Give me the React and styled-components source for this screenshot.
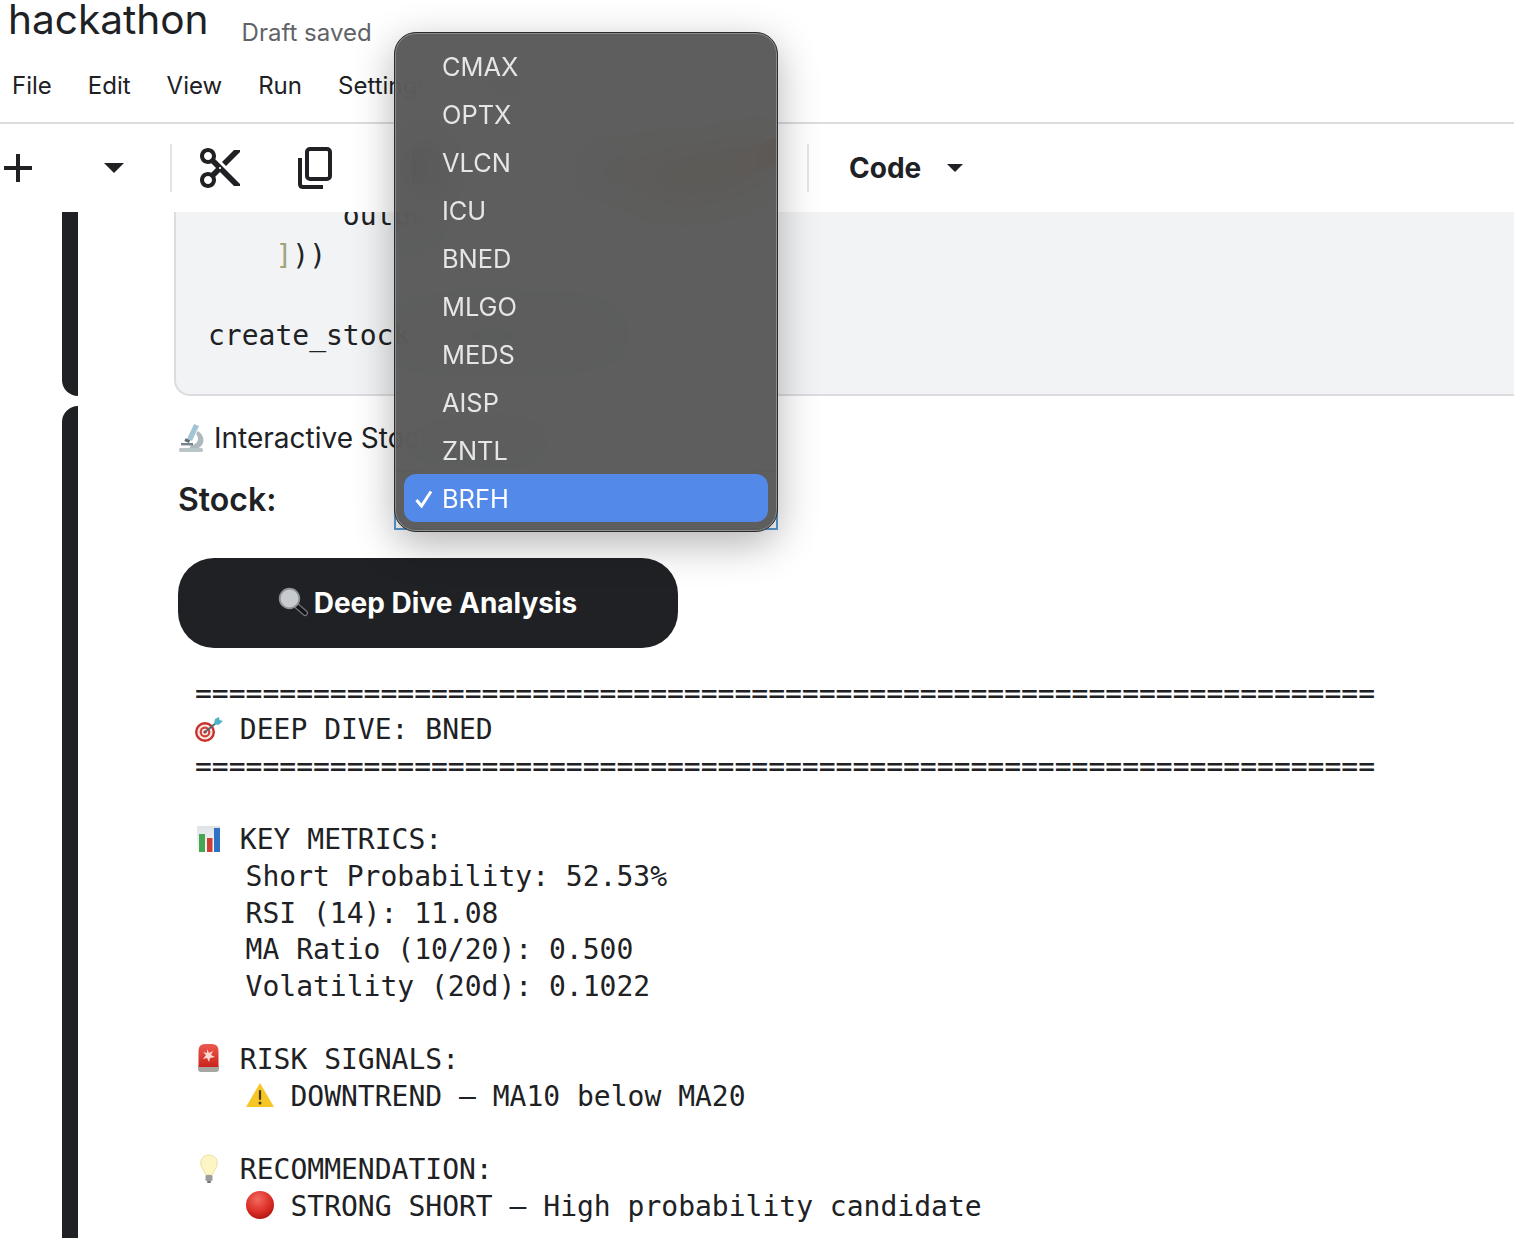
import React from "react";
import styled, { createGlobalStyle } from "styled-components";
import { MdContentCut } from "react-icons/md";

const GlobalStyle = createGlobalStyle`
  html, body {
    margin: 0;
    padding: 0;
    background: #fff;
    overflow: hidden;
  }
  body {
    font-family: Inter, "Liberation Sans", sans-serif;
    color: #202124;
  }
`;

const STOCKS = ["CMAX", "OPTX", "VLCN", "ICU", "BNED", "MLGO", "MEDS", "AISP", "ZNTL", "BRFH"];
const NAV = ["File", "Edit", "View", "Run", "Settings", "Add-ons", "Help"];

const Emoji = ({ name, small }) => {
  const art = {
    target: (
      <>
        <circle cx="10" cy="16" r="10" fill="#c9302c" />
        <circle cx="10" cy="16" r="7.6" fill="#f5e9e4" />
        <circle cx="10" cy="16" r="5.4" fill="#d1403a" />
        <circle cx="10" cy="16" r="3.2" fill="#f5e9e4" />
        <circle cx="10" cy="16" r="1.6" fill="#b8211d" />
        <path d="M10 16 L21 7" stroke="#55636b" strokeWidth="1.8" />
        <path d="M19 8 L20 3 L24 1 L24.5 4 L28 5 L23.5 9 Z" fill="#4fb3c4" />
      </>
    ),
    chart: (
      <>
        <defs>
          <linearGradient id="chartPaper" x1="0" y1="0" x2="0" y2="1">
            <stop offset="0" stopColor="#dfe3e6" />
            <stop offset="1" stopColor="#f8f9fa" />
          </linearGradient>
        </defs>
        <rect x="2" y="0" width="23" height="26" fill="url(#chartPaper)" />
        <rect x="4" y="8" width="6" height="18" fill="#45a851" />
        <rect x="12" y="12" width="5.5" height="14" fill="#d13c35" />
        <rect x="19" y="2" width="6" height="24" fill="#2f72c4" />
      </>
    ),
    siren: (
      <>
        <defs>
          <linearGradient id="sirenDome" x1="0" y1="0" x2="0" y2="1">
            <stop offset="0" stopColor="#ee5a4f" />
            <stop offset="1" stopColor="#c9241d" />
          </linearGradient>
        </defs>
        <rect x="3" y="19" width="21" height="7" rx="3" fill="#a9a7a4" />
        <path d="M3.5 21 V5 Q3.5 -2 10 -2 H17 Q23.5 -2 23.5 5 V21 Z" fill="url(#sirenDome)" />
        <path d="M12 3 l2 4 4 -2 -2 4 4 2 -5 1 -1 4 -2 -4 -4 1 3 -4 -3 -3 4 1 z" fill="#fbd9d2" />
      </>
    ),
    warning: (
      <>
        <path d="M14 0 L28 24 H0 Z" fill="#f6c624" />
        <rect x="12.9" y="7" width="2.2" height="10" rx="1" fill="#4a3a10" />
        <circle cx="14" cy="20" r="1.5" fill="#4a3a10" />
      </>
    ),
    bulb: (
      <>
        <path d="M14 -1 C7 -1 5 5 6 9 C7 13 10 15 10.5 19 H17.5 C18 15 21 13 22 9 C23 5 21 -1 14 -1 Z" fill="#fdf6c4" stroke="#ecdf9f" strokeWidth="1" />
        <rect x="10.5" y="19" width="7" height="6" rx="1.5" fill="#9a9ca0" />
        <rect x="12" y="25" width="4" height="2" rx="1" fill="#6f7175" />
      </>
    ),
    redCircle: (
      <>
        <defs>
          <radialGradient id="redBall" cx="0.42" cy="0.3" r="0.75">
            <stop offset="0" stopColor="#f26a60" />
            <stop offset="0.6" stopColor="#dc2f27" />
            <stop offset="1" stopColor="#a9140f" />
          </radialGradient>
        </defs>
        <circle cx="14" cy="12" r="14" fill="url(#redBall)" />
      </>
    ),
    magnifier: (
      <>
        <path d="M18 18 L26 25" stroke="#74777b" strokeWidth="6" strokeLinecap="round" />
        <path d="M18 18 L26 25" stroke="#121316" strokeWidth="3.6" strokeLinecap="round" />
        <circle cx="10.5" cy="10.5" r="9.8" fill="#c8cbce" stroke="#8f9296" strokeWidth="1.8" />
      </>
    ),
    microscope: (
      <>
        <path d="M20 8 C28 13 27 24 18 26 L11 26 L13 22 C20 22 22 15 18 11 Z" fill="#aeb9bd" />
        <path d="M16 1 L21 3 L14 18 L9 16 Z" fill="#a3c4d4" />
        <rect x="7" y="16" width="5" height="3" transform="rotate(24 9 17)" fill="#5c6b72" />
        <rect x="3" y="20" width="12" height="2.4" fill="#76848b" />
        <rect x="1" y="25" width="24" height="4" rx="1.5" fill="#b9c6c8" />
      </>
    ),
  };
  return (
    <EmojiGlyph $small={small} viewBox="0 0 28 30" aria-hidden="true">
      {art[name]}
    </EmojiGlyph>
  );
};

const App = () => (
  <Page>
    <GlobalStyle />
    <Header>
      <TitleRow>
        <Title>hackathon</Title>
        <SaveStatus>Draft saved</SaveStatus>
      </TitleRow>
      <Nav>
        {NAV.map((item) => (
          <NavItem key={item}>{item}</NavItem>
        ))}
      </Nav>
    </Header>

    <Toolbar>
      <PlusIcon viewBox="0 0 28 28">
        <path d="M14 0V28M0 14H28" stroke="#202124" strokeWidth="4" />
      </PlusIcon>
      <Caret $left={72} />
      <ToolDivider $left={46} />
      <CutIcon />
      <CopyIcon viewBox="0 0 36 42">
        <rect x="9" y="2" width="23" height="30" rx="3" fill="none" stroke="#202124" strokeWidth="4" />
        <path d="M2 11V37Q2 40 5 40H25" fill="none" stroke="#202124" strokeWidth="4" />
      </CopyIcon>
      <HiddenTools viewBox="0 0 410 60">
        <rect x="46" y="10" width="28" height="36" rx="3" fill="#202124" />
        <path d="M226 12L256 30L226 48Z" fill="#202124" />
        <path d="M285 36C325 42 375 34 420 6" fill="none" stroke="#ff4a00" strokeWidth="24" strokeLinecap="round" />
      </HiddenTools>
      <ToolDivider $left={31} />
      <CellType>Code</CellType>
      <Caret $left={26} $small />
    </Toolbar>

    <Scroller>
      <Cell $height={184}>
        <CellBar $bottom />
        <CodeBlock>
          <CodeText>
            {"        output\n    "}
            <Bracket>]</Bracket>
            {"))\n\ncreate_stock_dashboard()"}
          </CodeText>
        </CodeBlock>
      </Cell>

      <Cell>
        <CellBar $top />
        <OutputArea>
          <WidgetTitle>
            <Emoji name="microscope" small />
            Interactive Stock Analysis
          </WidgetTitle>
          <StockRow>
            <StockLabel>Stock:</StockLabel>
            <StockSelect />
          </StockRow>
          <DiveButton>
            <Emoji name="magnifier" small />
            Deep Dive Analysis
          </DiveButton>
          <Console>
            {"======================================================================\n"}
            <Emoji name="target" />
            {" DEEP DIVE: BNED\n"}
            {"======================================================================\n\n"}
            <Emoji name="chart" />
            {" KEY METRICS:\n"}
            {"   Short Probability: 52.53%\n"}
            {"   RSI (14): 11.08\n"}
            {"   MA Ratio (10/20): 0.500\n"}
            {"   Volatility (20d): 0.1022\n\n"}
            <Emoji name="siren" />
            {" RISK SIGNALS:\n   "}
            <Emoji name="warning" />
            {" DOWNTREND — MA10 below MA20\n\n"}
            <Emoji name="bulb" />
            {" RECOMMENDATION:\n   "}
            <Emoji name="redCircle" />
            {" STRONG SHORT — High probability candidate"}
          </Console>
        </OutputArea>
      </Cell>
    </Scroller>

    <StockMenu>
      {STOCKS.map((stock) => (
        <StockOption key={stock} $selected={stock === "BRFH"}>
          {stock === "BRFH" && (
            <CheckMark viewBox="0 0 18 18">
              <path d="M1.5 10L6.5 16L16 1.5" fill="none" stroke="#fff" strokeWidth="3" />
            </CheckMark>
          )}
          {stock}
        </StockOption>
      ))}
    </StockMenu>
  </Page>
);

export default App;

const Page = styled.div`
  position: relative;
  display: flex;
  flex-direction: column;
  width: 1514px;
  height: 1238px;
  overflow: hidden;
  background: #fff;
`;

const Header = styled.header`
  flex: none;
  height: 122px;
  border-bottom: 2px solid #dadce0;
  box-sizing: content-box;
`;

const TitleRow = styled.div`
  display: flex;
  align-items: flex-start;
  height: 66px;
  padding-left: 8px;
`;

const Title = styled.h1`
  margin: 0;
  font-size: 40.6px;
  line-height: 40px;
  font-weight: 400;
  color: #202124;
`;

const SaveStatus = styled.span`
  margin: 18px 0 0 33px;
  font-size: 24px;
  color: #5f6368;
`;

const Nav = styled.nav`
  display: flex;
  gap: 36px;
  padding-left: 12px;
`;

const NavItem = styled.span`
  font-size: 24px;
  line-height: 40px;
  color: #202124;
`;

const Toolbar = styled.div`
  flex: none;
  display: flex;
  align-items: center;
  height: 88px;
  padding-left: 4px;
  background: #fff;
`;

const PlusIcon = styled.svg`
  width: 28px;
  height: 28px;
`;

const Caret = styled.span`
  margin-left: ${(props) => props.$left}px;
  border-left: ${(props) => (props.$small ? 8 : 10)}px solid transparent;
  border-right: ${(props) => (props.$small ? 8 : 10)}px solid transparent;
  border-top: ${(props) => (props.$small ? 8 : 10)}px solid #202124;
`;

const ToolDivider = styled.span`
  width: 2px;
  height: 48px;
  margin-left: ${(props) => props.$left}px;
  background: #e3e4e6;
`;

const CutIcon = styled(MdContentCut)`
  width: 48px;
  height: 48px;
  margin-left: 24px;
  color: #202124;
`;

const CopyIcon = styled.svg`
  width: 36px;
  height: 42px;
  margin-left: 54px;
`;

const HiddenTools = styled.svg`
  width: 410px;
  height: 60px;
  margin-left: 32px;
  overflow: hidden;
`;

const CellType = styled.span`
  margin-left: 40px;
  font-size: 28px;
  font-weight: 700;
  color: #202124;
`;

const Scroller = styled.main`
  flex: 1;
  display: flex;
  flex-direction: column;
  gap: 10px;
  min-height: 0;
  overflow: hidden;
`;

const Cell = styled.section`
  flex: ${(props) => (props.$height ? "none" : "1")};
  display: flex;
  height: ${(props) => (props.$height ? `${props.$height}px` : "auto")};
  padding-left: 62px;
`;

const CellBar = styled.div`
  flex: none;
  width: 16px;
  background: #202124;
  border-bottom-left-radius: ${(props) => (props.$bottom ? "16px" : "0")};
  border-top-left-radius: ${(props) => (props.$top ? "16px" : "0")};
`;

const CodeBlock = styled.div`
  flex: 1;
  margin-left: 96px;
  padding-left: 32px;
  overflow: hidden;
  background: #f1f3f4;
  border-left: 2px solid #dadce0;
  border-bottom: 2px solid #dadce0;
  border-bottom-left-radius: 16px;
`;

const CodeText = styled.pre`
  margin: -16px 0 0;
  font-family: "DejaVu Sans Mono", "Liberation Mono", monospace;
  font-size: 28px;
  line-height: 40px;
  color: #202124;
`;

const Bracket = styled.span`
  color: #a3a37c;
`;

const OutputArea = styled.div`
  flex: 1;
  padding: 14px 0 0 100px;
`;

const WidgetTitle = styled.div`
  display: flex;
  align-items: center;
  gap: 8px;
  height: 36px;
  font-size: 28px;
  color: #202124;
`;

const StockRow = styled.div`
  display: flex;
  align-items: center;
  height: 60px;
  margin-top: 14px;
`;

const StockLabel = styled.label`
  width: 216px;
  padding-bottom: 2px;
  font-size: 32px;
  font-weight: 600;
  color: #202124;
`;

const StockSelect = styled.div`
  width: 380px;
  height: 56px;
  border: 2px solid #5b9bd5;
`;

const DiveButton = styled.button`
  display: flex;
  align-items: center;
  justify-content: center;
  gap: 7px;
  width: 500px;
  height: 90px;
  margin-top: 28px;
  padding: 0;
  border: none;
  border-radius: 36px;
  background: #202124;
  color: #fff;
  font-family: Inter, "Liberation Sans", sans-serif;
  font-size: 28px;
  font-weight: 700;
`;

const Console = styled.pre`
  margin: 27.6px 0 0 17px;
  font-family: "DejaVu Sans Mono", "Liberation Mono", monospace;
  font-size: 28px;
  line-height: 36.67px;
  color: #202124;
`;

const EmojiGlyph = styled.svg`
  display: inline-block;
  flex: none;
  width: 28px;
  height: 30px;
  vertical-align: -7px;
  overflow: visible;
`;

const StockMenu = styled.ul`
  position: absolute;
  top: 32px;
  left: 394px;
  box-sizing: border-box;
  width: 384px;
  height: 500px;
  margin: 0;
  padding: 9px 9px 0;
  list-style: none;
  border: 1px solid #2c2c2c;
  border-radius: 22px;
  background: rgba(84, 85, 84, 0.95);
  backdrop-filter: blur(24px);
  box-shadow: inset 0 0 0 1px #8c8c8c, 0 12px 40px rgba(0, 0, 0, 0.3);
`;

const StockOption = styled.li`
  position: relative;
  height: 48px;
  padding-left: 38px;
  border-radius: 12px;
  font-size: 25.4px;
  line-height: 50px;
  color: ${(props) => (props.$selected ? "#fff" : "#e6e6e6")};
  background: ${(props) => (props.$selected ? "#5389e8" : "transparent")};
`;

const CheckMark = styled.svg`
  position: absolute;
  left: 11px;
  top: 16px;
  width: 18px;
  height: 18px;
`;
